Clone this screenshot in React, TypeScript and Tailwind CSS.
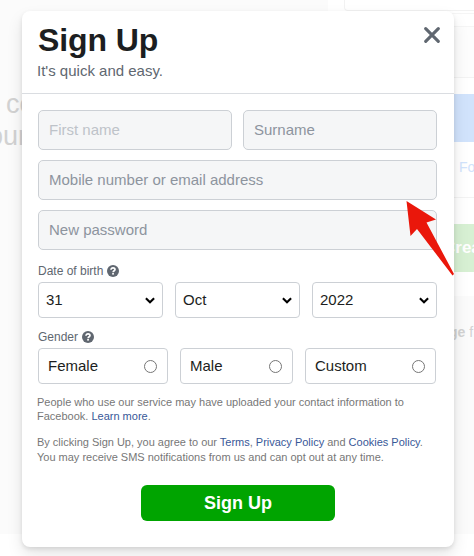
import React from "react";

function Help() {
  return (
    <svg className="ml-1 h-3 w-3" viewBox="0 0 12 12">
      <circle cx="6" cy="6" r="6" fill="#606770" />
      <path d="M4 4.8C4 3.4 4.9 2.8 6 2.8S8 3.5 8 4.5C8 5.8 6.2 5.7 6.1 7.2" fill="none" stroke="#fff" strokeWidth="1.7" />
      <rect x="5.2" y="8" width="1.7" height="1.6" fill="#fff" />
    </svg>
  );
}

function Field({ label, faded }: { label: string; faded?: boolean }) {
  return (
    <div className="flex h-10 flex-1 items-center rounded-[5px] border border-[#ccd0d5] bg-[#f5f6f7] pl-[10px]">
      <span className={faded ? "text-[#bec3c9]" : "text-[#8d949e]"}>{label}</span>
    </div>
  );
}

function Select({ value }: { value: string }) {
  return (
    <div className="flex h-9 w-[125px] items-center justify-between rounded-[4px] border border-[#ccd0d5] bg-white pl-[7px] pr-[7px] text-[#1c1e21]">
      <span>{value}</span>
      <svg className="h-[7px] w-[10px]" viewBox="0 0 10 7">
        <path d="M.9 1.2L5 5.2L9.1 1.2" fill="none" stroke="#000" strokeWidth="2.1" />
      </svg>
    </div>
  );
}

function Radio({ label, width }: { label: string; width: string }) {
  return (
    <div className={`flex h-9 items-center justify-between rounded-[4px] border border-[#ccd0d5] pl-[9px] pr-[10px] text-[#1c1e21] ${width}`}>
      <span>{label}</span>
      <span className="h-[13px] w-[13px] rounded-full border border-[#767676]" />
    </div>
  );
}

function Link({ children }: { children: React.ReactNode }) {
  return <span className="text-[#385898]">{children}</span>;
}

function Backdrop() {
  return (
    <div className="flex h-[556px] w-[474px] flex-col overflow-hidden bg-white">
      <div className="flex h-[534px] bg-[#fbfbfb]">
        <div className="w-[328px] shrink-0 whitespace-nowrap pt-[88px] text-[27px] leading-8 text-[#d2d2d2]">
          <div className="pl-[6px]">co</div>
          <div className="-ml-[12px]">our</div>
        </div>
        <div className="h-[296px] w-[146px] shrink-0 bg-white">
          <div className="ml-4 h-[11px] rounded-bl border-b border-l border-[#f2f2f2]" />
          <div className="mt-[2px] h-[14px] border-y border-[#f5f5f5]" />
          <div className="h-[51px] border-b border-[#f3f3f3] bg-[#fdfdfd]" />
          <div className="mt-4 h-12 bg-[#d1e3fc]" />
          <div className="h-14 border-b border-[#f3f3f3] pl-[131px] pt-[14px] text-[14px] leading-[22px] text-[#d1e3fc]">Fo</div>
          <div className="mt-[26px] flex h-12 items-center bg-[#d7f0d3] pl-[115px] text-[17px] font-bold text-white">Crea</div>
          <div className="mt-12 whitespace-nowrap pl-[121px] text-[14px] leading-[25px] text-[#d2d2d2]"><b>ge</b> f</div>
        </div>
      </div>
    </div>
  );
}

export default function App() {
  return (
    <main className="relative h-[556px] w-[474px] overflow-hidden font-['Liberation_Sans',Arial,sans-serif]">
      <Backdrop />
      <section className="absolute left-[22px] top-[11px] h-[536px] w-[432px] rounded-[8px] bg-white shadow-[0_2px_4px_rgba(0,0,0,0.1),0_8px_16px_rgba(0,0,0,0.1)]">
        <header className="flex h-[83px] justify-between border-b border-[#dadde1] pl-4 pr-[14px] pt-[10px]">
          <div>
            <h1 className="text-[32px] font-bold leading-[38px] tracking-[-0.1px] text-[#1c1e21]">Sign Up</h1>
            <p className="-ml-px text-[15px] leading-6 text-[#606770]">It's quick and easy.</p>
          </div>
          <svg className="mt-[6px] h-4 w-4" viewBox="0 0 16 16">
            <path d="M1.7 1.7L14.3 14.3M14.3 1.7L1.7 14.3" stroke="#606770" strokeWidth="3.1" strokeLinecap="round" />
          </svg>
        </header>
        <div className="pl-4 pr-[17px] pt-4 text-[15px]">
          <div className="flex flex-col gap-[10px]">
            <div className="flex gap-[11px]"><Field label="First name" faded /><Field label="Surname" /></div>
            <div className="flex"><Field label="Mobile number or email address" /></div>
            <div className="flex"><Field label="New password" /></div>
          </div>
          <div className="mt-[14px] flex h-[14px] items-center text-[12px] text-[#606770]">Date of birth<Help /></div>
          <div className="mt-1 flex gap-3"><Select value="31" /><Select value="Oct" /><Select value="2022" /></div>
          <div className="mt-[12px] flex h-[14px] items-center text-[12px] text-[#606770]">Gender<Help /></div>
          <div className="mt-1 flex gap-3">
            <Radio label="Female" width="w-[130px]" />
            <Radio label="Male" width="w-[113px]" />
            <Radio label="Custom" width="w-[131px]" />
          </div>
          <p className="-ml-px mt-[11px] whitespace-nowrap text-[11px] leading-[14px] text-[#777]">
            People who use our service may have uploaded your contact information to<br />Facebook. <Link>Learn more</Link>.
          </p>
          <p className="-ml-px mt-3 whitespace-nowrap text-[11px] leading-[15px] tracking-[-0.01px] text-[#777]">
            By clicking Sign Up, you agree to our <Link>Terms</Link>, <Link>Privacy Policy</Link> and <Link>Cookies Policy</Link>.<br />You may receive SMS notifications from us and can opt out at any time.
          </p>
          <button className="ml-[103px] mt-5 flex h-9 w-[194px] items-center justify-center rounded-[6px] bg-[#00a400] text-[18px] font-bold text-white">Sign Up</button>
        </div>
      </section>
      <svg className="absolute left-[406px] top-[201px] h-[75px] w-[49px]" viewBox="0 0 49 75">
        <path d="M.5 0L30 18.5L20.5 21.5L48 73L46.5 74.5L11 28L4.5 35Z" fill="#ea170b" />
      </svg>
    </main>
  );
}
